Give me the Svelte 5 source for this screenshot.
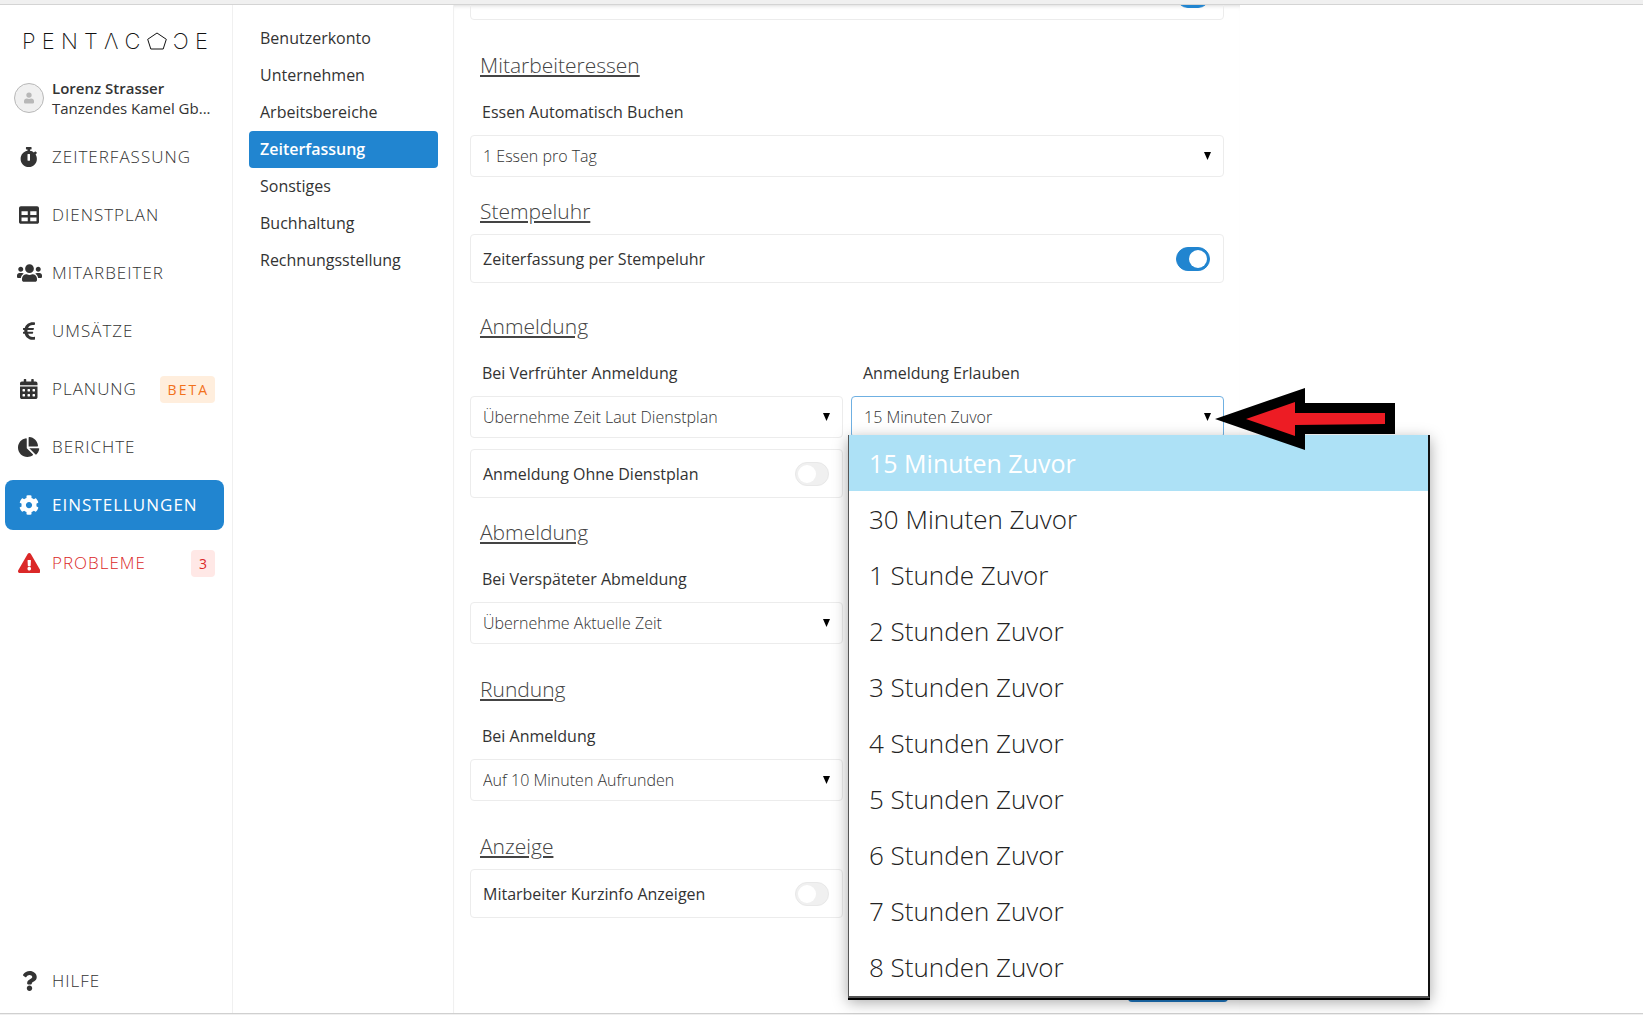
<script>
  const icons = {
    stopwatch: { w: 448, d: 'M432 304c0 114.9-93.1 208-208 208S16 418.9 16 304c0-104 76.3-190.2 176-205.5V64h-28c-6.6 0-12-5.4-12-12V12c0-6.6 5.4-12 12-12h120c6.6 0 12 5.4 12 12v40c0 6.6-5.4 12-12 12h-28v34.5c37.5 5.8 71.7 21.6 99.7 44.6l27.5-27.5c4.7-4.7 12.3-4.7 17 0l28.3 28.3c4.7 4.7 4.7 12.3 0 17l-29.4 29.4-.6.6C419.7 223.3 432 262.2 432 304zm-176 36V188.5c0-6.6-5.4-12-12-12h-40c-6.6 0-12 5.4-12 12V340c0 6.6 5.4 12 12 12h40c6.6 0 12-5.4 12-12z' },
    table: { w: 512, d: 'M464 32H48C21.49 32 0 53.49 0 80v352c0 26.51 21.49 48 48 48h416c26.51 0 48-21.49 48-48V80c0-26.51-21.49-48-48-48zM224 416H64v-96h160v96zm0-160H64v-96h160v96zm224 160H288v-96h160v96zm0-160H288v-96h160v96z' },
    users: { w: 640, d: 'M96 224c35.3 0 64-28.7 64-64s-28.7-64-64-64-64 28.7-64 64 28.7 64 64 64zm448 0c35.3 0 64-28.7 64-64s-28.7-64-64-64-64 28.7-64 64 28.7 64 64 64zm32 32h-64c-17.6 0-33.5 7.1-45.1 18.6 40.3 22.1 68.9 62 75.1 109.4h66c17.7 0 32-14.3 32-32v-32c0-35.3-28.7-64-64-64zm-256 0c61.9 0 112-50.1 112-112S381.9 32 320 32 208 82.1 208 144s50.1 112 112 112zm76.8 32h-8.3c-20.8 10-43.9 16-68.5 16s-47.6-6-68.5-16h-8.3C179.6 288 128 339.6 128 403.2V432c0 26.5 21.5 48 48 48h288c26.5 0 48-21.5 48-48v-28.8c0-63.6-51.6-115.2-115.2-115.2zm-223.7-13.4C161.5 263.1 145.6 256 128 256H64c-35.3 0-64 28.7-64 64v32c0 17.7 14.3 32 32 32h65.9c6.3-47.4 34.9-87.3 75.2-109.4z' },
    euro: { w: 320, d: 'M310.706 413.765c-1.314-6.63-7.835-10.872-14.424-9.369-10.692 2.439-27.422 5.413-45.426 5.413-56.763 0-101.929-34.79-121.461-85.449h113.689a12 12 0 0 0 11.708-9.369l6.373-28.36c1.686-7.502-4.019-14.631-11.708-14.631H115.22c-1.21-14.328-1.414-28.287.137-42.245H261.95a12 12 0 0 0 11.723-9.434l6.512-29.755c1.638-7.484-4.061-14.566-11.723-14.566H130.184c20.633-44.991 62.69-75.03 117.619-75.03 14.486 0 28.564 2.25 37.851 4.145 6.216 1.268 12.347-2.498 14.002-8.623l11.991-44.368c1.822-6.741-2.465-13.616-9.326-14.917C290.217 34.912 270.71 32 249.635 32 152.451 32 74.03 92.252 45.075 176H12c-6.627 0-12 5.373-12 12v29.755c0 6.627 5.373 12 12 12h21.569c-1.009 13.607-1.181 29.287-.181 42.245H12c-6.627 0-12 5.373-12 12v28.36c0 6.627 5.373 12 12 12h30.114C67.139 414.692 145.264 480 249.635 480c26.301 0 48.562-4.544 61.101-7.788 6.167-1.595 10.027-7.708 8.788-13.957l-8.818-44.49z' },
    calendar: { w: 448, d: 'M0 464c0 26.5 21.5 48 48 48h352c26.500 0 48-21.500 48-48V192H0v272zM64 268a12 12 0 0 1 12-12h40a12 12 0 0 1 12 12v40a12 12 0 0 1-12 12H76a12 12 0 0 1-12-12zM192 268a12 12 0 0 1 12-12h40a12 12 0 0 1 12 12v40a12 12 0 0 1-12 12h-40a12 12 0 0 1-12-12zM320 268a12 12 0 0 1 12-12h40a12 12 0 0 1 12 12v40a12 12 0 0 1-12 12h-40a12 12 0 0 1-12-12zM64 396a12 12 0 0 1 12-12h40a12 12 0 0 1 12 12v40a12 12 0 0 1-12 12H76a12 12 0 0 1-12-12zM192 396a12 12 0 0 1 12-12h40a12 12 0 0 1 12 12v40a12 12 0 0 1-12 12h-40a12 12 0 0 1-12-12zM320 396a12 12 0 0 1 12-12h40a12 12 0 0 1 12 12v40a12 12 0 0 1-12 12h-40a12 12 0 0 1-12-12zM400 64h-48V16c0-8.800-7.200-16-16-16h-32c-8.800 0-16 7.200-16 16v48H160V16c0-8.800-7.200-16-16-16h-32c-8.800 0-16 7.200-16 16v48H48C21.500 64 0 85.500 0 112v48h448v-48c0-26.500-21.500-48-48-48z' },
    pie: { w: 544, d: 'M527.79 288H290.5l158.03 158.03c6.04 6.04 15.98 6.53 22.19.68 38.7-36.46 65.32-85.61 73.13-140.86 1.34-9.46-6.51-17.85-16.06-17.85zm-15.83-64.8C503.72 103.74 408.26 8.28 288.8.04 279.68-.59 272 7.1 272 16.24V240h223.77c9.14 0 16.82-7.68 16.19-16.8zM224 288V50.71c0-9.55-8.39-17.4-17.84-16.06C86.99 51.49-4.1 155.6.14 280.37 4.5 408.51 114.83 513.59 243.03 511.98c50.4-.63 96.97-16.87 135.26-44.03 7.9-5.6 8.42-17.23 1.57-24.08L224 288z' },
    cog: { w: 512, d: 'M487.4 315.7l-42.6-24.6c4.3-23.2 4.3-47 0-70.2l42.6-24.6c4.9-2.8 7.1-8.6 5.5-14-11.1-35.6-30-67.8-54.7-94.6-3.8-4.1-10-5.1-14.8-2.3L380.8 110c-17.9-15.4-38.5-27.3-60.8-35.1V25.8c0-5.6-3.9-10.5-9.4-11.7-36.7-8.2-74.3-7.8-109.2 0-5.5 1.2-9.4 6.1-9.4 11.7V75c-22.2 7.9-42.8 19.8-60.8 35.1L88.7 85.5c-4.9-2.8-11-1.9-14.8 2.3-24.7 26.7-43.6 58.9-54.7 94.6-1.7 5.4.6 11.2 5.5 14L67.3 221c-4.3 23.2-4.3 47 0 70.2l-42.6 24.6c-4.9 2.8-7.1 8.6-5.5 14 11.1 35.6 30 67.8 54.7 94.6 3.8 4.1 10 5.1 14.8 2.3l42.6-24.6c17.9 15.4 38.5 27.3 60.8 35.1v49.2c0 5.6 3.9 10.5 9.4 11.7 36.7 8.2 74.3 7.8 109.2 0 5.5-1.2 9.4-6.1 9.4-11.7v-49.2c22.2-7.9 42.8-19.8 60.8-35.1l42.6 24.6c4.9 2.8 11 1.9 14.8-2.3 24.7-26.7 43.6-58.9 54.7-94.6 1.5-5.5-.7-11.3-5.6-14.1zM256 336c-44.1 0-80-35.9-80-80s35.9-80 80-80 80 35.9 80 80-35.9 80-80 80z' },
    warning: { w: 576, d: 'M569.517 440.013C587.975 472.007 564.806 512 527.94 512H48.054c-36.937 0-59.999-40.055-41.577-71.987L246.423 23.985c18.467-32.009 64.72-31.951 83.154 0l239.94 416.028zM288 354c-25.405 0-46 20.595-46 46s20.595 46 46 46 46-20.595 46-46-20.595-46-46-46zm-43.673-165.346l7.418 136c.347 6.364 5.609 11.346 11.982 11.346h48.546c6.373 0 11.635-4.982 11.982-11.346l7.418-136c.375-6.874-5.098-12.654-11.982-12.654h-63.383c-6.884 0-12.356 5.78-11.981 12.654z' },
    question: { w: 384, d: 'M202.021 0C122.202 0 70.503 32.703 29.914 91.026c-7.363 10.58-5.093 25.086 5.178 32.874l43.138 32.709c10.373 7.865 25.132 6.026 33.253-4.148 25.049-31.381 43.63-49.449 82.757-49.449 30.764 0 68.816 19.799 68.816 49.631 0 22.552-18.617 34.134-48.993 51.164-35.423 19.86-82.299 44.576-82.299 106.405V320c0 13.255 10.745 24 24 24h72.471c13.255 0 24-10.745 24-24v-5.773c0-42.86 125.268-44.645 125.268-160.627C377.504 66.256 286.902 0 202.021 0zM192 373.459c-38.196 0-69.271 31.075-69.271 69.271 0 38.195 31.075 69.27 69.271 69.27s69.271-31.075 69.271-69.271-31.075-69.27-69.271-69.27z' },
  };

  const nav = [
    { label: 'ZEITERFASSUNG', icon: 'stopwatch' },
    { label: 'DIENSTPLAN', icon: 'table' },
    { label: 'MITARBEITER', icon: 'users' },
    { label: 'UMSÄTZE', icon: 'euro' },
    { label: 'PLANUNG', icon: 'calendar', badge: 'BETA' },
    { label: 'BERICHTE', icon: 'pie' },
    { label: 'EINSTELLUNGEN', icon: 'cog', active: true },
    { label: 'PROBLEME', icon: 'warning', badge: '3', danger: true },
  ];

  const pages = ['Benutzerkonto', 'Unternehmen', 'Arbeitsbereiche', 'Zeiterfassung', 'Sonstiges', 'Buchhaltung', 'Rechnungsstellung'];
  const currentPage = 'Zeiterfassung';

  const leadTimes = [
    '15 Minuten Zuvor',
    '30 Minuten Zuvor',
    '1 Stunde Zuvor',
    ...[2, 3, 4, 5, 6, 7, 8].map((n) => `${n} Stunden Zuvor`),
  ];
  let leadTime = $state(leadTimes[0]);
</script>

{#snippet icon(name)}
  <span class="icon">
    <svg viewBox="0 0 {icons[name].w} 512" aria-hidden="true"><path fill-rule="evenodd" d={icons[name].d} /></svg>
  </span>
{/snippet}

{#snippet caret()}
  <svg class="caret" viewBox="0 0 7 8" aria-hidden="true"><path d="M0 0h7L3.500 8z" /></svg>
{/snippet}

{#snippet dropdown(id, label, value)}
  <div class="field">
    <label class="field-label" for={id}>{label}</label>
    <div class="select">
      <select {id}><option>{value}</option></select>
      {@render caret()}
    </div>
  </div>
{/snippet}

{#snippet toggle(label, checked)}
  <label class="toggle">
    <span>{label}</span>
    <input type="checkbox" {checked} />
  </label>
{/snippet}

<div class="app">
  <div class="edge top"></div>
  <div class="shell">
    <aside class="sidebar">
      <div class="logo" role="img" aria-label="Pentacode">
        <span>P</span><span>E</span><span>N</span><span>T</span><span>Λ</span><span>C</span>
        <svg viewBox="0 0 20 18" aria-hidden="true"><path d="M10 1 19.300 7.300 16.200 17H3.800L.7 7.300z" /></svg>
        <span>Ɔ</span><span>E</span>
      </div>
      <div class="account">
        <span class="avatar">
          <svg viewBox="0 0 12 14" aria-hidden="true"><circle cx="6" cy="3.500" r="3.200" /><path d="M1 13.500c-.6 0-1-.4-1-1V11c0-2 1.500-3.300 3.300-3.300 1.600.8 3.800.8 5.400 0C10.500 7.700 12 9 12 11v1.500c0 .6-.4 1-1 1z" /></svg>
        </span>
        <div class="who">
          <strong>Lorenz Strasser</strong>
          <span>Tanzendes Kamel Gb...</span>
        </div>
      </div>
      <nav class="nav">
        {#each nav as item}
          <a href="#top" class:active={item.active} class:danger={item.danger}>
            {@render icon(item.icon)}
            <span class="text">{item.label}</span>
            {#if item.badge}<span class="badge">{item.badge}</span>{/if}
          </a>
        {/each}
        <a href="#top" class="help">{@render icon('question')}<span class="text">HILFE</span></a>
      </nav>
    </aside>

    <nav class="pages">
      {#each pages as page}
        <a href="#top" class:current={page === currentPage}>{page}</a>
      {/each}
    </nav>

    <main class="panel">
      <div class="scrolled">{@render toggle('', true)}</div>

      <section>
        <h2>Mitarbeiteressen</h2>
        {@render dropdown('meal', 'Essen Automatisch Buchen', '1 Essen pro Tag')}
      </section>

      <section class="tight">
        <h2>Stempeluhr</h2>
        {@render toggle('Zeiterfassung per Stempeluhr', true)}
      </section>

      <section class="medium">
        <h2>Anmeldung</h2>
        <div class="columns">
          {@render dropdown('early', 'Bei Verfrühter Anmeldung', 'Übernehme Zeit Laut Dienstplan')}
          <div class="field">
            <label class="field-label" for="lead">Anmeldung Erlauben</label>
            <div class="select open">
              <select id="lead" bind:value={leadTime}>
                {#each leadTimes as time}<option>{time}</option>{/each}
              </select>
              {@render caret()}
              <div class="menu" role="listbox" aria-label="Anmeldung Erlauben">
                {#each leadTimes as time}
                  <button type="button" role="option" aria-selected={time === leadTime} onclick={() => (leadTime = time)}>{time}</button>
                {/each}
              </div>
              <svg class="pointer" viewBox="0 0 180 64" aria-hidden="true">
                <path d="M0 32 90 1v15h90v31H90v16z" />
                <path class="fill" d="M31 32 80 15v11h90v11l-90 1v11z" />
              </svg>
            </div>
          </div>
          {@render toggle('Anmeldung Ohne Dienstplan', false)}
        </div>
      </section>

      <section class="tight">
        <h2>Abmeldung</h2>
        <div class="columns">
          {@render dropdown('late', 'Bei Verspäteter Abmeldung', 'Übernehme Aktuelle Zeit')}
        </div>
      </section>

      <section>
        <h2>Rundung</h2>
        <div class="columns">
          {@render dropdown('round', 'Bei Anmeldung', 'Auf 10 Minuten Aufrunden')}
        </div>
      </section>

      <section>
        <h2>Anzeige</h2>
        <div class="columns">
          {@render toggle('Mitarbeiter Kurzinfo Anzeigen', false)}
        </div>
      </section>

      <button type="button" class="save" aria-label="Speichern"></button>
    </main>
  </div>
  <div class="edge bottom"></div>
</div>

<style>
  :global(body) {
    background: #fff;
  }
  .app {
    --blue: #2185d0;
    --line: #ececec;
    display: flex;
    flex-direction: column;
    min-height: 100vh;
    overflow: hidden;
    color: #333;
    font-family: 'Open Sans', 'Noto Sans', sans-serif;
    font-size: 16px;
    line-height: 22px;
  }
  .app,
  .app :global(*) {
    box-sizing: border-box;
  }
  a {
    color: inherit;
    text-decoration: none;
  }
  .edge {
    background: #f0f0f0;
  }
  .top {
    height: 5px;
    border-bottom: 1px solid #d4d4d4;
  }
  .bottom {
    height: 2px;
    border-top: 1px solid #d0d0d0;
  }
  .shell {
    display: flex;
    flex: 1;
  }

  .sidebar {
    display: flex;
    flex-direction: column;
    width: 233px;
    flex-shrink: 0;
    padding: 24px 8px 7px 5px;
    border-right: 1px solid #f0f0f0;
  }
  .logo {
    display: flex;
    align-items: center;
    justify-content: space-between;
    width: 186px;
    height: 24px;
    margin-left: 17px;
    color: #111;
    font-family: Inter, 'DejaVu Sans', sans-serif;
    font-size: 22px;
    font-weight: 200;
    line-height: 24px;
  }
  .logo svg {
    width: 20px;
    height: 18px;
    fill: none;
    stroke: currentColor;
  }
  .account {
    display: flex;
    align-items: center;
    gap: 8px;
    margin: 25px 0 14px 9px;
    font-size: 15px;
    line-height: 20px;
  }
  .avatar {
    display: grid;
    place-items: center;
    width: 30px;
    height: 30px;
    border: 1px solid #b8b8b8;
    border-radius: 50%;
    background: #f0f0f0;
  }
  .avatar svg {
    width: 10px;
    height: 12px;
    fill: #b8b8b8;
  }
  .who {
    display: flex;
    flex-direction: column;
  }
  .who strong {
    font-weight: 600;
  }
  .nav {
    display: flex;
    flex: 1;
    flex-direction: column;
    gap: 8px;
  }
  .nav a {
    display: flex;
    align-items: center;
    height: 50px;
    padding: 0 9px;
    border-radius: 8px;
    font-size: 17px;
    font-weight: 300;
    letter-spacing: 1px;
  }
  .nav .active {
    background: var(--blue);
    color: #fff;
    font-weight: 400;
  }
  .nav .danger {
    color: #db2828;
  }
  .nav .help {
    margin-top: auto;
  }
  .icon {
    display: flex;
    justify-content: center;
    width: 30px;
    margin-right: 8px;
  }
  .icon svg {
    height: 20px;
    fill: currentColor;
  }
  .badge {
    margin-left: auto;
    padding: 3px 6px 2px 8px;
    border-radius: 4px;
    background: #ffeedd;
    color: #f2711c;
    font-size: 14px;
    font-weight: 400;
    letter-spacing: 2px;
  }
  .danger .badge {
    background: #ffe8e6;
    color: #db2828;
  }

  .pages {
    display: flex;
    flex-direction: column;
    width: 221px;
    flex-shrink: 0;
    padding: 15px 15px 0 16px;
    border-right: 1px solid #f0f0f0;
  }
  .pages a {
    height: 37px;
    padding: 0 11px;
    border-radius: 4px;
    font-weight: 500;
    line-height: 37px;
  }
  .pages .current {
    background: var(--blue);
    color: #fff;
    font-weight: 600;
  }

  .panel {
    display: flex;
    flex: 1;
    flex-direction: column;
    max-width: 786px;
    padding: 0 16px 11px;
    box-shadow: inset 0 4px 5px -4px #ccc;
  }
  .scrolled {
    margin-top: -34px;
    clip-path: inset(34px 0 0);
  }
  section {
    margin-top: 32px;
  }
  .medium {
    margin-top: 30px;
  }
  .tight {
    margin-top: 21px;
  }
  h2 {
    margin: 0 10px 10px;
    color: #444;
    font-size: 21px;
    font-weight: 300;
    line-height: 26px;
    text-decoration: underline;
  }
  .columns {
    display: grid;
    grid-template-columns: 1fr 1fr;
    gap: 11px 8px;
  }
  .field-label {
    display: block;
    padding: 13px 12px 12px;
    font-weight: 500;
  }
  .select {
    position: relative;
  }
  select {
    display: block;
    width: 100%;
    height: 42px;
    padding: 0 12px;
    border: 1px solid var(--line);
    border-radius: 4px;
    background: transparent;
    color: #333;
    font: inherit;
    font-weight: 300;
    appearance: none;
  }
  .open select {
    border-color: #6fb0e2;
  }
  .caret {
    position: absolute;
    top: 17px;
    right: 13px;
    width: 7px;
    height: 8px;
  }
  .toggle {
    display: flex;
    align-items: center;
    justify-content: space-between;
    height: 49px;
    padding: 0 13px 0 12px;
    border: 1px solid var(--line);
    border-radius: 4px;
    font-weight: 500;
  }
  .toggle input {
    width: 34px;
    height: 24px;
    margin: 0;
    padding: 2px;
    border-radius: 12px;
    background: #f0f0f0;
    appearance: none;
    border: 1px solid #e8e8e8;
  }
  .toggle input::before {
    content: '';
    display: block;
    width: 18px;
    height: 18px;
    border-radius: 50%;
    background: #fff;
  }
  .toggle input:checked {
    border-color: var(--blue);
    background: var(--blue);
  }
  .toggle input:checked::before {
    margin-left: auto;
  }
  .menu {
    position: absolute;
    z-index: 1;
    top: 39px;
    left: -3px;
    display: flex;
    flex-direction: column;
    width: 582px;
    padding-bottom: 1px;
    border: solid #555;
    border-width: 0 2px 2px 1px;
    border-right-color: #111;
    background: #fff;
    box-shadow:
      0 2px 0 #000,
      0 4px 14px rgba(0, 0, 0, 0.35);
  }
  .menu button {
    height: 56px;
    padding: 0 20px;
    border: 0;
    background: none;
    color: #222;
    font: inherit;
    font-size: 26px;
    font-weight: 300;
    text-align: left;
  }
  .menu button[aria-selected='true'] {
    background: #ade1f6;
    color: #fff;
    font-size: 25px;
    font-weight: 400;
  }
  .pointer {
    position: absolute;
    z-index: 2;
    top: -9px;
    left: 364px;
    width: 180px;
    height: 64px;
  }
  .pointer .fill {
    fill: #ed1c24;
  }
  .save {
    width: 100px;
    height: 40px;
    margin: auto -4px 0 auto;
    border: 0;
    border-radius: 4px;
    background: #1f78c1;
  }
</style>
